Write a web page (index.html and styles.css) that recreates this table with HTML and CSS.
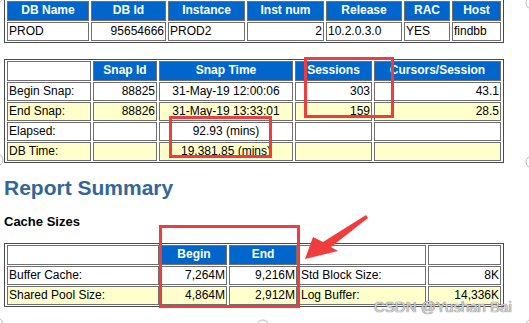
FILE: index.html
```html
<!DOCTYPE html>
<html>
<head>
<meta charset="utf-8">
<link rel="stylesheet" href="styles.css">
</head>
<body>
<div class="page">
  <table class="awr t1">
    <tr>
      <th class="w82">DB Name</th><th class="w75">DB Id</th><th class="w77">Instance</th><th class="w77">Inst num</th><th class="w76">Release</th><th class="w46">RAC</th><th class="w49">Host</th>
    </tr>
    <tr>
      <td class="l">PROD</td><td class="r">95654666</td><td class="l">PROD2</td><td class="r">2</td><td class="l">10.2.0.3.0</td><td class="l">YES</td><td class="l">findbb</td>
    </tr>
  </table>

  <table class="awr t2">
    <tr>
      <td class="w84"></td><th class="w64">Snap Id</th><th class="w134">Snap Time</th><th class="w77">Sessions</th><th class="w127">Cursors/Session</th>
    </tr>
    <tr>
      <td class="l">Begin Snap:</td><td class="r">88825</td><td class="ctr">31-May-19 12:00:06</td><td class="r">303</td><td class="r">43.1</td>
    </tr>
    <tr class="alt">
      <td class="l">End Snap:</td><td class="r">88826</td><td class="ctr">31-May-19 13:33:01</td><td class="r">159</td><td class="r">28.5</td>
    </tr>
    <tr>
      <td class="l">Elapsed:</td><td></td><td class="ctr">92.93 (mins)</td><td></td><td></td>
    </tr>
    <tr class="alt">
      <td class="l">DB Time:</td><td></td><td class="ctr">19,381.85 (mins)</td><td></td><td></td>
    </tr>
  </table>

  <h2 class="summary">Report Summary</h2>
  <h3 class="sub">Cache Sizes</h3>

  <table class="awr t3">
    <tr>
      <td class="w152"></td><th class="w66">Begin</th><th class="w68">End</th><td class="w127"></td><td class="w73"></td>
    </tr>
    <tr>
      <td class="l">Buffer Cache:</td><td class="r">7,264M</td><td class="r">9,216M</td><td class="l">Std Block Size:</td><td class="r">8K</td>
    </tr>
    <tr class="alt">
      <td class="l">Shared Pool Size:</td><td class="r">4,864M</td><td class="r">2,912M</td><td class="l">Log Buffer:</td><td class="r">14,336K</td>
    </tr>
  </table>
</div>

<div class="mark box1"></div>
<div class="mark box2"></div>
<div class="mark box3"></div>

<svg class="overlay" width="529" height="323" viewBox="0 0 529 323">
  <polygon points="366,215 368,218 331,247 338,251 305,259 313,237 323,242" fill="#ef3d3d"/>
  <g fill="#fff" stroke="#b8b8b8" stroke-width="1">
    <circle cx="-3" cy="-3" r="6"/>
    <circle cx="532" cy="3" r="6"/>
    <circle cx="-3" cy="160" r="6"/>
    <circle cx="532" cy="162" r="6"/>
    <circle cx="-3" cy="324" r="6"/>
    <circle cx="263" cy="326" r="6"/>
    <circle cx="532" cy="325" r="6"/>
  </g>
</svg>

<div class="watermark">CSDN @Yushan Bai</div>
</body>
</html>
```

FILE: styles.css
```css
html, body {
  margin: 0;
  padding: 0;
  background: #ffffff;
}

body {
  position: relative;
  width: 529px;
  height: 323px;
  overflow: hidden;
  font-family: "Liberation Sans", Arial, Helvetica, sans-serif;
  font-size: 12px;
  color: #000;
}

.page {
  padding-left: 4px;
}

.awr {
  box-sizing: border-box;
  width: 500px;
  table-layout: fixed;
  border-collapse: separate;
  border-spacing: 2px 1px;
  border: 1px solid #4a4a4a;
}

.t1 {
  margin-top: -1px;
}

.t2 {
  margin-top: 16px;
}

.awr th,
.awr td {
  box-sizing: border-box;
  font-size: 12px;
  line-height: 14px;
  border: 1px solid #707070;
  white-space: nowrap;
  overflow: hidden;
}

.awr th {
  background: #0066cc;
  color: #ffffff;
  font-weight: bold;
  text-align: center;
  padding: 1px 2px 3px;
  height: 20px;
}

.awr td {
  background: #ffffff;
  padding: 1px 1px 2px;
  height: 19px;
  vertical-align: top;
}

.awr tr.alt td {
  background: #ffffcc;
}

.l { text-align: left; }
.r { text-align: right; }
.ctr { text-align: center; }

.w46 { width: 46px; }
.w49 { width: 49px; }
.w64 { width: 64px; }
.w66 { width: 66px; }
.w68 { width: 68px; }
.w73 { width: 73px; }
.w75 { width: 75px; }
.w76 { width: 76px; }
.w77 { width: 77px; }
.w82 { width: 82px; }
.w84 { width: 84px; }
.w127 { width: 127px; }
.w134 { width: 134px; }
.w152 { width: 152px; }

.summary {
  margin: 13px 0 0;
  font-size: 21px;
  line-height: 24px;
  font-weight: bold;
  color: #336699;
}

.sub {
  margin: 14px 0 0;
  font-size: 13px;
  line-height: 15px;
  font-weight: bold;
  color: #000;
}

.t3 {
  margin-top: 14px;
}

.mark {
  position: absolute;
  box-sizing: border-box;
  border: 3px solid #ef3d3d;
}

.box1 { left: 304px; top: 57px; width: 90px; height: 61px; }
.box2 { left: 169px; top: 116px; width: 103px; height: 42px; }
.box3 { left: 159px; top: 225px; width: 141px; height: 83px; }

.overlay {
  position: absolute;
  left: 0;
  top: 0;
}

.watermark {
  position: absolute;
  left: 374px;
  top: 298px;
  font-size: 15px;
  line-height: 17px;
  color: #d4d4d4;
  text-shadow: 0 0 1px #7a7a7a, 0 0 1px #7a7a7a;
  white-space: nowrap;
}
```
